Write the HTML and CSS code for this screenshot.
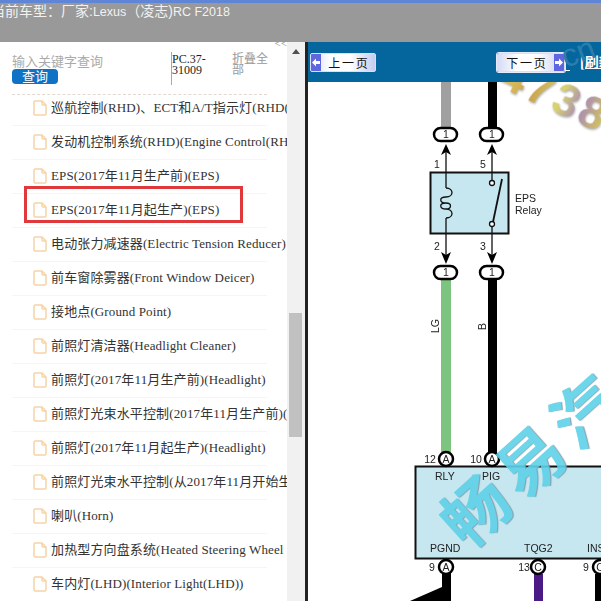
FILE: index.html
```html
<!DOCTYPE html>
<html lang="zh-CN">
<head>
  <meta charset="UTF-8">
  <title>当前车型</title>
  <link rel="stylesheet" href="styles.css">
</head>
<body>
  <svg class="defs" width="0" height="0">
    <symbol id="doc" viewBox="0 0 14 16">
      <path d="M2 1H9L13 5V14Q13 15 12 15H2Q1 15 1 14V2Q1 1 2 1Z M9 1V4Q9 5 10 5H13"/>
    </symbol>
  </svg>
  <div class="top-bar">
    <div class="top-line"></div>
    <div class="car-title">当前车型：厂家:<span class="latin">Lexus</span>（凌志)<span class="latin">RC F2018</span></div>
  </div>
  <div class="main">
    <div class="side">
      <div class="side-list">
        <div class="search-row">
          <div class="search-box">
            <div class="search-hint">输入关键字查询</div>
            <div class="search-btn">查询</div>
          </div>
          <div class="code">PC.37-31009</div>
          <div class="fold">折叠全部</div>
          <div class="collapse">&lt;&lt;</div>
        </div>
        <ul class="tree">
          <li><svg class="doc"><use href="#doc"/></svg><span>巡航控制(RHD)、ECT和A/T指示灯(RHD(Cruise Control)</span></li>
          <li><svg class="doc"><use href="#doc"/></svg><span>发动机控制系统(RHD)(Engine Control(RHD))</span></li>
          <li><svg class="doc"><use href="#doc"/></svg><span>EPS(2017年11月生产前)(EPS)</span></li>
          <li><svg class="doc"><use href="#doc"/></svg><span>EPS(2017年11月起生产)(EPS)</span></li>
          <li><svg class="doc"><use href="#doc"/></svg><span>电动张力减速器(Electric Tension Reducer)</span></li>
          <li><svg class="doc"><use href="#doc"/></svg><span>前车窗除雾器(Front Window Deicer)</span></li>
          <li><svg class="doc"><use href="#doc"/></svg><span>接地点(Ground Point)</span></li>
          <li><svg class="doc"><use href="#doc"/></svg><span>前照灯清洁器(Headlight Cleaner)</span></li>
          <li><svg class="doc"><use href="#doc"/></svg><span>前照灯(2017年11月生产前)(Headlight)</span></li>
          <li><svg class="doc"><use href="#doc"/></svg><span>前照灯光束水平控制(2017年11月生产前)(Headlight)</span></li>
          <li><svg class="doc"><use href="#doc"/></svg><span>前照灯(2017年11月起生产)(Headlight)</span></li>
          <li><svg class="doc"><use href="#doc"/></svg><span>前照灯光束水平控制(从2017年11月开始生产)</span></li>
          <li><svg class="doc"><use href="#doc"/></svg><span>喇叭(Horn)</span></li>
          <li><svg class="doc"><use href="#doc"/></svg><span>加热型方向盘系统(Heated Steering Wheel System)</span></li>
          <li><svg class="doc"><use href="#doc"/></svg><span>车内灯(LHD)(Interior Light(LHD))</span></li>
        </ul>
        <div class="mark-box"></div>
      </div>
      <div class="scrollbar">
        <div class="scroll-up"></div>
        <div class="scroll-thumb"></div>
      </div>
    </div>
    <div class="divider"></div>
    <div class="content">
      <div class="toolbar">
        <div class="wm-site">cn</div>
        <div class="page-btn prev">
          <svg class="arrow" viewBox="0 0 10 17"><path d="M1 8.500L5 4.500V7H9V10H5V12.500Z"/></svg>
          <span class="btn-text">上 一 页</span>
        </div>
        <div class="page-btn next">
          <span class="btn-text">下 一 页</span>
          <svg class="arrow" viewBox="0 0 10 17"><path d="M9 8.500L5 4.500V7H1V10H5V12.500Z"/></svg>
        </div>
        <div class="link-gap"></div>
        <div class="refresh">[刷新]</div>
      </div>
      <div class="drawing">
        <svg class="diagram" viewBox="0 0 293 519" width="293" height="519">
          <!-- wires -->
          <rect x="133" y="0" width="10" height="46" fill="#a0a0a0"/>
          <rect x="180" y="0" width="9" height="46" fill="#000"/>
          <rect x="133" y="198" width="10" height="175" fill="#7cc47f"/>
          <rect x="180" y="198" width="9" height="175" fill="#000"/>
          <rect x="134" y="490" width="9" height="29" fill="#000"/>
          <path d="M134 505L102 519H143V505Z" fill="#000"/>
          <rect x="226" y="492" width="9" height="27" fill="#4b1a85"/>
          <rect x="287" y="492" width="6" height="27" fill="#000"/>
          <!-- relay -->
          <rect x="122.500" y="90.500" width="78" height="61" fill="#c6e6f0" stroke="#111" stroke-width="2"/>
          <g fill="none" stroke="#111" stroke-width="1.300">
            <path d="M138 66V106M138 136V174"/>
            <path d="M138 106C146 106 146 115 138 115C131 115 131 121 138 121C144 121 144 127 138 127C131 127 131 121 138 121M138 127C146 127 146 136 138 136"/>
            <path d="M184 66V99M184 144V174"/>
            <circle cx="184" cy="101" r="2.500" fill="#fff"/>
            <circle cx="184" cy="142" r="2.500" fill="#fff"/>
          </g>
          <path d="M185 140L194 97" stroke="#111" stroke-width="1.800" fill="none"/>
          <path d="M138 62L143 73L138 70L133 73Z M184 62L189 73L184 70L179 73Z M138 182L133 170L138 173L143 170Z M184 182L179 170L184 173L189 170Z" fill="#000"/>
          <!-- connectors -->
          <g fill="#fff" stroke="#000" stroke-width="2.500">
            <rect x="126" y="46" width="23" height="13" rx="6.500"/>
            <rect x="172" y="46" width="23" height="13" rx="6.500"/>
            <rect x="126" y="184" width="23" height="13" rx="6.500"/>
            <rect x="172" y="184" width="23" height="13" rx="6.500"/>
          </g>
          <g class="dia-text" text-anchor="middle">
            <text x="138" y="56">1</text>
            <text x="184" y="56">1</text>
            <text x="138" y="194">1</text>
            <text x="184" y="194">1</text>
            <text x="129" y="86">1</text>
            <text x="175" y="86">5</text>
            <text x="129" y="168">2</text>
            <text x="175" y="168">3</text>
          </g>
          <text class="dia-text" x="207" y="120">EPS</text>
          <text class="dia-text" x="207" y="132">Relay</text>
          <text class="dia-text" transform="translate(131 251) rotate(-90)">LG</text>
          <text class="dia-text" transform="translate(178 248) rotate(-90)">B</text>
          <!-- ecu -->
          <rect x="107.500" y="384.500" width="200" height="92" fill="#c6e6f0" stroke="#111" stroke-width="2"/>
          <g class="dia-text">
            <text x="127" y="398">RLY</text>
            <text x="174" y="398">PIG</text>
            <text x="122" y="470">PGND</text>
            <text x="216" y="470">TQG2</text>
            <text x="279" y="470">INS</text>
            <text x="122" y="381" class="pin">12</text>
            <text x="168" y="381" class="pin">10</text>
            <text x="124" y="489" class="pin">9</text>
            <text x="216" y="489" class="pin">13</text>
            <text x="278" y="489" class="pin">9</text>
          </g>
          <g fill="#fff" stroke="#000" stroke-width="2.500">
            <circle cx="138" cy="377" r="7"/>
            <circle cx="184" cy="377" r="7"/>
            <circle cx="138" cy="485" r="7"/>
            <circle cx="230" cy="485" r="7"/>
            <circle cx="292" cy="485" r="7"/>
          </g>
          <g class="dia-text" text-anchor="middle">
            <text x="138" y="381">A</text>
            <text x="184" y="381">A</text>
            <text x="138" y="489">A</text>
            <text x="230" y="489">C</text>
            <text x="292" y="489">C</text>
          </g>
        </svg>
        <div class="wm-num">4738</div>
        <div class="wm-cn">畅易汽车</div>
      </div>
    </div>
  </div>
</body>
</html>
```

FILE: styles.css
```css
* {
  box-sizing: border-box;
}
html, body {
  margin: 0;
  padding: 0;
  width: 601px;
  height: 601px;
  overflow: hidden;
  font-family: "Liberation Serif", "Noto Sans CJK SC", serif;
  background: #fff;
}
.defs {
  position: absolute;
}
.top-bar {
  height: 42px;
  background: #999;
  overflow: hidden;
}
.top-line {
  height: 3px;
  background: #5f86d6;
}
.car-title {
  margin: 0 0 0 -9px;
  font: 14px/17px "Liberation Sans", "Noto Sans CJK SC", sans-serif;
  color: #f2f2f2;
  white-space: nowrap;
}
.latin {
  font-size: 12.500px;
}
.main {
  display: flex;
  height: 559px;
}
.side {
  display: flex;
  flex: none;
  width: 305px;
}
.side-list {
  position: relative;
  width: 287px;
  overflow: hidden;
}
.search-row {
  display: flex;
  height: 53px;
  margin: 0 20px -3px 12px;
  border-bottom: 1px dashed #e3d8d0;
  position: relative;
}
.search-box {
  width: 159px;
  flex: none;
  padding-top: 12px;
}
.search-hint {
  font: 13px/15px "Liberation Sans", "Noto Sans CJK SC", sans-serif;
  color: #aaa;
}
.search-btn {
  width: 46px;
  height: 15px;
  background: #0f72c4;
  border-radius: 4px;
  color: #fff;
  font: 13px/15px "Liberation Sans", "Noto Sans CJK SC", sans-serif;
  text-align: center;
}
.code {
  width: 61px;
  flex: none;
  height: 33px;
  margin-top: 10px;
  border-left: 1px solid #a9a9a9;
  font-size: 12px;
  line-height: 11px;
  padding-top: 2px;
  color: #222;
}
.fold {
  width: 38px;
  flex: none;
  margin-top: 12px;
  font: 12px/11px "Liberation Sans", "Noto Sans CJK SC", sans-serif;
  color: #999;
}
.collapse {
  position: absolute;
  right: -20px;
  top: -5px;
  font-size: 11px;
  color: #777;
}
.tree {
  list-style: none;
  margin: 0;
  padding: 0;
}
.tree li {
  display: flex;
  align-items: center;
  height: 34px;
  margin-left: 12px;
  padding: 0 0 5px 21px;
  width: 255px;
  border-bottom: 1px solid #f5f5f5;
  white-space: nowrap;
  font-size: 13px;
  letter-spacing: 0.13px;
  color: #333;
}
.tree li span {
  margin-left: 4px;
}
.doc {
  flex: none;
  width: 14px;
  height: 16px;
  margin-top: 3px;
  fill: #fff;
  stroke: #f7d4a8;
  stroke-width: 1.500;
}
.mark-box {
  position: absolute;
  left: 24px;
  top: 144px;
  width: 219px;
  height: 37px;
  border: 3px solid #e0393b;
}
.scrollbar {
  width: 18px;
  background: #f1f1f1;
  position: relative;
}
.scroll-up {
  width: 0;
  margin: 7px auto 0;
  border: 4px solid transparent;
  border-top: 0;
  border-bottom: 5px solid #505050;
}
.scroll-thumb {
  position: absolute;
  left: 2px;
  top: 271px;
  width: 13px;
  height: 124px;
  background: #c1c1c1;
}
.divider {
  flex: none;
  width: 3px;
  background: #222;
}
.content {
  flex: 1;
  min-width: 0;
}
.toolbar {
  position: relative;
  display: flex;
  align-items: center;
  height: 40px;
  background: #04669c;
  padding-left: 2px;
  overflow: hidden;
}
.page-btn {
  display: flex;
  flex: none;
  align-items: center;
  height: 19px;
  background: linear-gradient(90deg, #d5dcf5, #fff 30%, #fff 60%, #c3cdf0);
  border: 1px solid #d7e0fa;
  border-radius: 2px;
  font: 12px/17px "Noto Sans CJK SC", sans-serif;
  word-spacing: -1px;
  color: #111;
  overflow: hidden;
}
.prev {
  width: 66px;
}
.next {
  width: 68px;
  margin-left: 121px;
  box-shadow: 0 0 0 1px #e4e9fb;
}
.arrow {
  flex: none;
  width: 10px;
  height: 17px;
  background: #5f66e0;
  fill: #fff;
}
.btn-text {
  flex: 1;
  text-align: center;
  white-space: nowrap;
}
.link-gap {
  flex: none;
  width: 5px;
  height: 1px;
  margin: 17px 0 0 0;
  background: #fff;
}
.refresh {
  flex: none;
  margin-left: 10px;
  color: #fff;
  font: bold 14px/17px "Liberation Serif", "Noto Sans CJK SC", serif;
  text-decoration: underline;
  white-space: nowrap;
}
.drawing {
  position: relative;
  height: 519px;
  overflow: hidden;
}
.diagram {
  display: block;
  filter: blur(0.3px);
}
.dia-text {
  font: 10.500px "Liberation Sans", sans-serif;
  fill: #222;
}
.pin {
  text-anchor: middle;
}
.wm-num {
  position: absolute;
  left: 190px;
  top: -13px;
  font: bold 46px/52px "Liberation Sans", sans-serif;
  letter-spacing: 3px;
  background: linear-gradient(90deg, #e2c95a, #c9a14f 30%, #d9d46c 55%, #a98ab8 75%, #d8c850);
  -webkit-background-clip: text;
  background-clip: text;
  color: transparent;
  filter: drop-shadow(1px 1px 1px #aaa);
  transform: rotate(25deg);
}
.wm-cn {
  position: absolute;
  left: 140px;
  top: 412px;
  font: bold 66px/72px "Noto Sans CJK SC", sans-serif;
  letter-spacing: 8px;
  color: #5ed2e8;
  opacity: 0.9;
  text-shadow: 1px 1px 1px #7c9aa6;
  transform: rotate(-42deg);
  transform-origin: left center;
  white-space: nowrap;
}
.wm-site {
  position: absolute;
  left: 253px;
  top: -8px;
  font: 32px/36px "Liberation Sans", sans-serif;
  color: #2a7eae;
  transform: rotate(-20deg);
}
```
